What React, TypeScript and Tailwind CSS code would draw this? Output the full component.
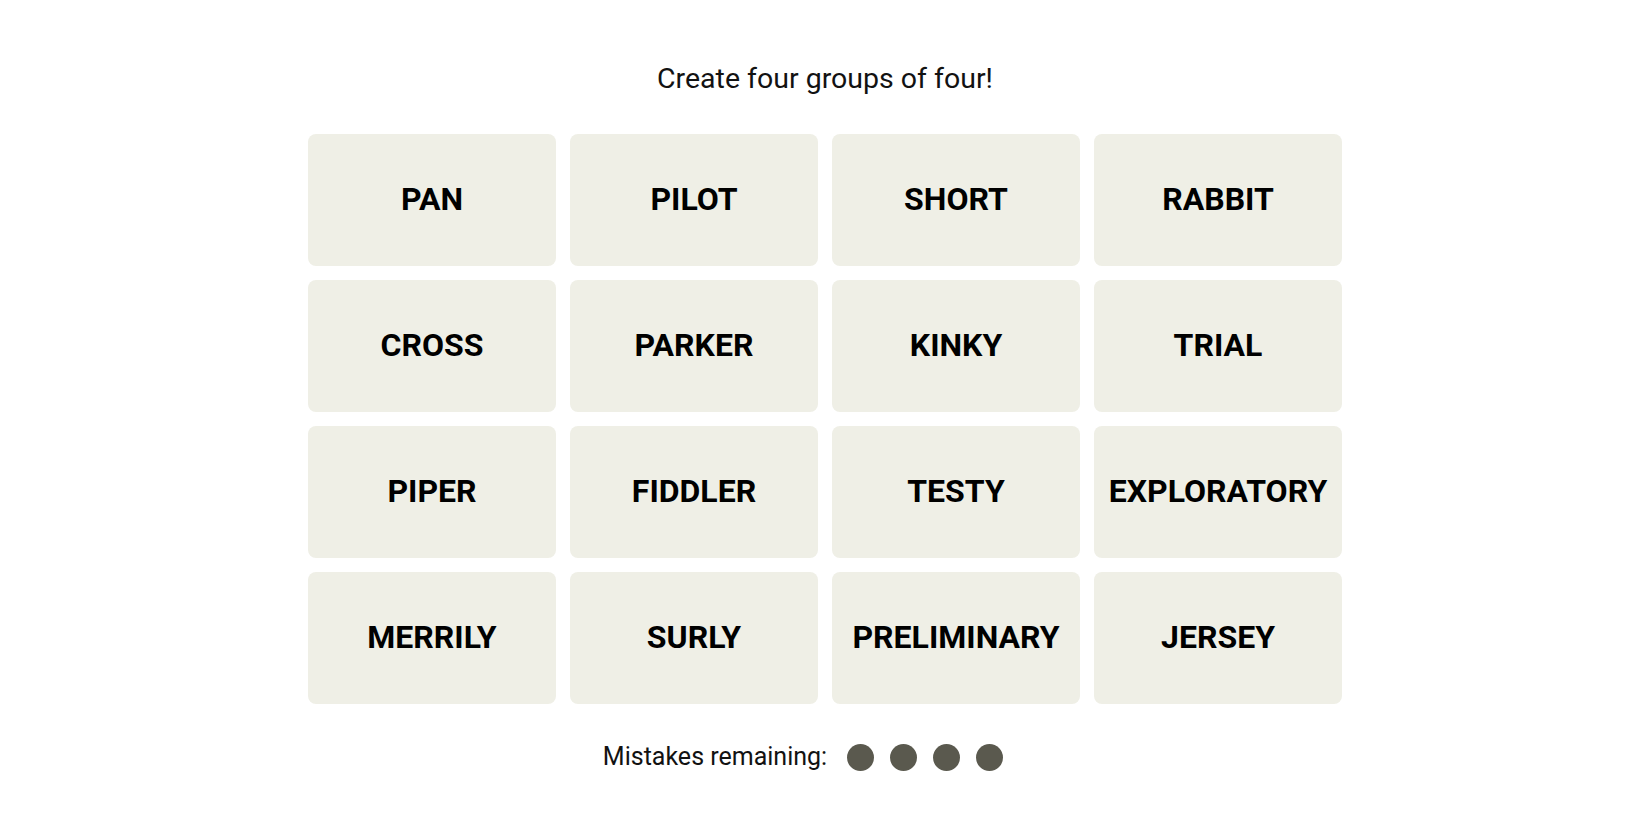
const words = [
  'PAN', 'PILOT', 'SHORT', 'RABBIT',
  'CROSS', 'PARKER', 'KINKY', 'TRIAL',
  'PIPER', 'FIDDLER', 'TESTY', 'EXPLORATORY',
  'MERRILY', 'SURLY', 'PRELIMINARY', 'JERSEY',
]

export default function App() {
  return (
    <div className="min-h-screen w-full bg-white pt-[62px] font-['Roboto',_'Liberation_Sans',_sans-serif] text-black">
      {/* Heading */}
      <p className="text-center text-[28.5px] leading-[34px] font-normal text-[#121212]">
        Create four groups of four!
      </p>

      {/* Board */}
      <div className="mx-auto mt-[38px] grid w-[1034px] grid-cols-4 gap-[14px]">
        {words.map((w) => (
          <button
            key={w}
            className="flex h-[132px] items-center justify-center rounded-[8px] bg-[#efefe6] pb-[3px] text-[32px] font-bold leading-none text-black"
          >
            {w}
          </button>
        ))}
      </div>

      {/* Mistakes */}
      <div className="mt-[38px] flex justify-center">
        <div className="mr-[44px] flex h-[30px] items-center">
          <span className="text-[25px] leading-[30px] text-[#121212]">Mistakes remaining:</span>
          <div className="ml-[20px] flex gap-[16px]">
            {[1, 2, 3, 4].map((i) => (
              <span key={i} className="block h-[27px] w-[27px] rounded-full bg-[#5a594e]" />
            ))}
          </div>
        </div>
      </div>
    </div>
  )
}
